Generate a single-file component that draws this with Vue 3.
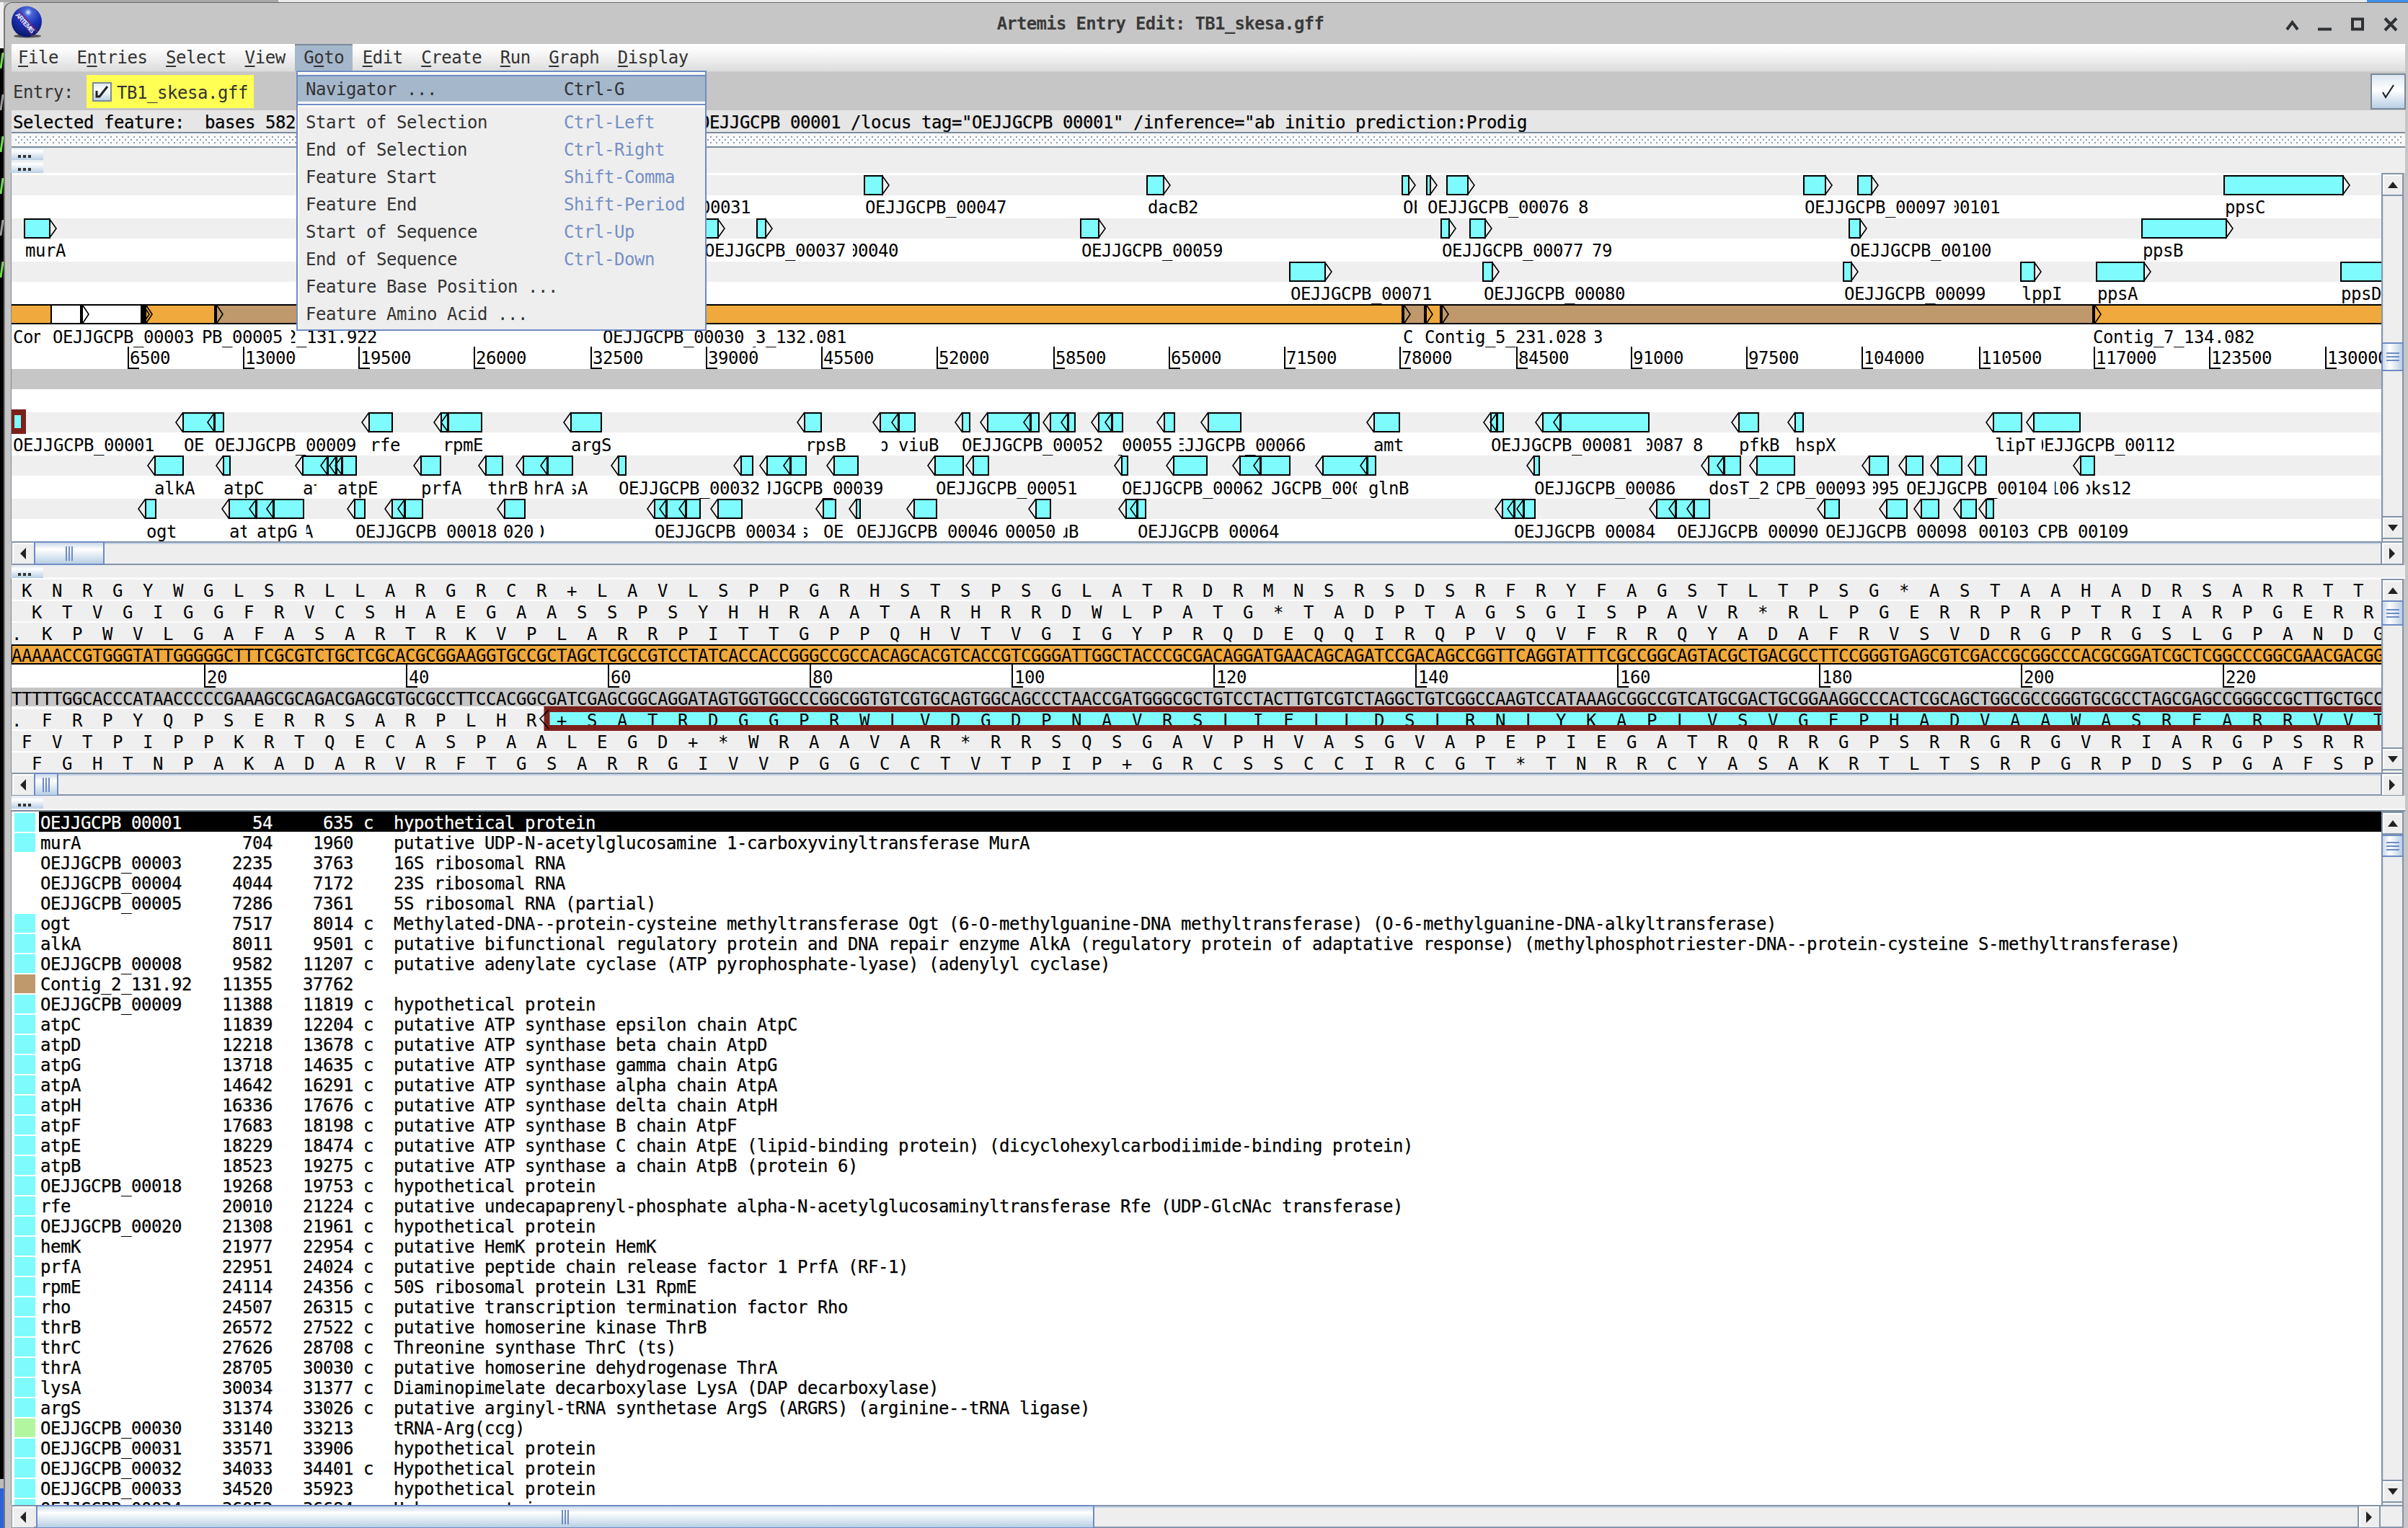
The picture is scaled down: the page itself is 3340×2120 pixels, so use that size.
<script setup>
const menus = [
  ['', 'F', 'ile'], ['E', 'n', 'tries'], ['', 'S', 'elect'], ['', 'V', 'iew'], ['G', 'o', 'to'],
  ['', 'E', 'dit'], ['', 'C', 'reate'], ['', 'R', 'un'], ['', 'G', 'raph'], ['', 'D', 'isplay'],
]
const gotoItems = [
  ['Start of Selection', 'Ctrl-Left'],
  ['End of Selection', 'Ctrl-Right'],
  ['Feature Start', 'Shift-Comma'],
  ['Feature End', 'Shift-Period'],
  ['Start of Sequence', 'Ctrl-Up'],
  ['End of Sequence', 'Ctrl-Down'],
  ['Feature Base Position ...', ''],
  ['Feature Amino Acid ...', ''],
]
const selectionRange = 'Selected feature:  bases 582'
const selectionNotes = 'OEJJGCPB_00001 /locus_tag="OEJJGCPB_00001" /inference="ab initio prediction:Prodig'

/* ---- Overview: x positions are window coordinates, OX is the canvas' left edge ---- */
const OX = 16
const forward = [
  { y: 3, boxes: [[1198, 1224], [1590, 1614], [1944, 1954], [1978, 1984], [2006, 2036], [2501, 2532], [2576, 2596], [3084, 3250]] },
  { y: 63, boxes: [[33, 69], [950, 996], [1049, 1062], [1498, 1524], [1998, 2010], [2038, 2060], [2564, 2580], [2970, 3088]] },
  { y: 123, boxes: [[1788, 1838], [2056, 2070], [2556, 2568], [2802, 2822], [2907, 2974], [3246, 3340]] },
]
const reverse = [
  { y: 332, boxes: [[253, 297], [297, 310], [511, 544], [611, 621], [621, 668], [791, 834], [1115, 1139], [1220, 1246], [1246, 1269], [1334, 1345], [1369, 1429], [1429, 1441], [1456, 1481], [1481, 1491], [1523, 1542], [1542, 1557], [1614, 1629], [1675, 1721], [1905, 1941], [2067, 2076], [2076, 2085], [2139, 2164], [2164, 2287], [2411, 2439], [2489, 2501], [2764, 2804], [2820, 2885]] },
  { y: 392, boxes: [[214, 254], [309, 319], [419, 454], [454, 466], [466, 474], [474, 494], [583, 611], [673, 697], [725, 759], [759, 794], [857, 868], [1027, 1044], [1063, 1096], [1096, 1118], [1156, 1190], [1296, 1336], [1349, 1371], [1555, 1564], [1627, 1674], [1719, 1748], [1748, 1789], [1834, 1896], [1896, 1908], [2127, 2135], [2369, 2391], [2391, 2414], [2436, 2489], [2592, 2619], [2643, 2667], [2687, 2721], [2739, 2755], [2885, 2905]] },
  { y: 452, boxes: [[201, 216], [317, 355], [355, 379], [379, 421], [491, 506], [543, 561], [561, 586], [699, 728], [907, 924], [924, 951], [951, 971], [995, 1029], [1141, 1159], [1187, 1193], [1267, 1299], [1436, 1457], [1561, 1577], [1577, 1589], [2083, 2100], [2100, 2113], [2113, 2129], [2297, 2324], [2324, 2349], [2349, 2371], [2530, 2551], [2616, 2645], [2664, 2689], [2719, 2741], [2754, 2765]] },
]
const P = 'OEJJGCPB_'
/* [text, x, visible from, visible to] */
const labelRows = [
  { y: 56, items: [['00031', 971], [P + '00047', 1200], ['dacB2', 1592], ['OE', 1946, 0, 1965], [P + '00076', 1980], ['8', 2189], [P + '00097', 2503], ['00101', 2704, 2711], ['ppsC', 3086]] },
  { y: 116, items: [['murA', 35], [P + '00037', 977], ['00040', 1176, 1183], [P + '00059', 1500], [P + '00077', 2000], ['79', 2208], [P + '00100', 2566], ['ppsB', 2972]] },
  { y: 176, items: [[P + '00071', 1790], [P + '00080', 2058], [P + '00099', 2558], ['lppI', 2804], ['ppsA', 2909], ['ppsD', 3247]] },
  { y: 236, items: [['Con', 18, 0, 56], [P + '00003', 73], ['PB_00005', 280], ['2_131.922', 397, 404], [P + '00030', 836], ['_3_132.081', 1034, 1044], ['C', 1946], ['Contig_5_231.028', 1976], ['3', 2209, 2212], ['Contig_7_134.082', 2903]] },
  { y: 386, items: [[P + '00001', 18], ['OE', 255], [P + '00009', 298], ['rfe', 513], ['rpmE', 614], ['argS', 792], ['rpsB', 1117], ['b', 1218, 1223], ['viuB', 1246], [P + '00052', 1334], ['_00055', 1542, 1551], ['EJJGCPB_00066', 1629, 1636], ['amt', 1905], [P + '00081', 2068], ['0087', 2279, 2284], ['8', 2348], ['pfkB', 2412], ['hspX', 2490], ['lipT', 2767], [P + '00112', 2821, 2832]] },
  { y: 446, items: [['alkA', 214], ['atpC', 310], ['at', 420, 0, 439], ['atpE', 468], ['prfA', 584], ['thrB', 676], ['hrA', 740], ['sA', 787, 794], [P + '00032', 858], ['JJGCPB_00039', 1057, 1065], [P + '00051', 1298], [P + '00062', 1556], ['JGCPB_000', 1763, 0, 1882], ['glnB', 1898], [P + '00086', 2128], ['dosT_2', 2370], ['CPB_00093', 2462, 2465], ['095', 2592, 2598], [P + '00104', 2644], ['106', 2842, 2850], ['pks12', 2886, 2894]] },
  { y: 506, items: [['ogt', 203], ['at', 318, 0, 342], ['atpG', 356], ['A', 420, 425], [P + '00018', 493], ['020', 698], ['0', 741, 750], [P + '00034', 908], ['s', 1108, 1115], ['OE', 1142], [P + '00046', 1188], ['00050', 1394], ['uB', 1468, 1475], [P + '00064', 1578], [P + '00084', 2100], [P + '00090', 2326], [P + '00098', 2532], ['00103', 2744], ['CPB_00109', 2826]] },
]
const labels = labelRows.flatMap(r =>
  r.items.map(([t, x, from = 0, to = 3340]) => {
    const left = Math.max(from, x)
    const right = Math.min(to, x + t.length * 14 + 2)
    return { t, y: r.y, left: left - OX, w: right - left, dx: x - left }
  }),
)
const scale = [177, 337, 497, 657, 819, 979, 1139, 1299, 1461, 1621, 1781, 1941, 2103, 2262, 2422, 2582, 2745, 2904, 3064, 3225]
  .map((x, i) => ({ x: x - OX, n: 6500 * (i + 1) }))
const contigs = [
  [16, 71, '#f0a93c'], [71, 113, '#fff'], [113, 197, '#fff'], [197, 299, '#f0a93c'], [299, 948, '#bf986b'],
  [948, 1946, '#f0a93c'], [1946, 1977, '#bf986b'], [1977, 1999, '#f0a93c'], [1999, 2904, '#bf986b'], [2904, 3340, '#f0a93c'],
]
const contigTips = [113, 197, 201, 299, 1946, 1977, 1999, 2904]

/* ---- Base view ---- */
const bases =
  'AAAAACCGTGGGTATTGGGGGCTTTCGCGTCTGCTCGCACGCGGAAGGTGCCGCTAGCTCGCCGTCCTATCACCACCGGGCCGCCACAGCACGTCACCGTCGGGATTGGCTACCCGCGACAGGATGAACAGCAGATCCGACAGCCGGTTCAGGTATTTCGCCGGCAGTACGCTGACGCCTTCCGGGTGAGCGTCGACCGCGGCCCACGCGGATCGCTCGGCCCGGCGAACGACGGT'
const pair = { A: 'T', T: 'A', C: 'G', G: 'C' }
const complement = [...bases].map(b => pair[b]).join('')
const order = 'TCAG'
const code = 'FFLLSSSSYY#+CC*WLLLLPPPPHHQQRRRRIIIMTTTTNNKKSSRRVVVVAAAADDEEGGGG'
const amino = c => code[order.indexOf(c[0]) * 16 + order.indexOf(c[1]) * 4 + order.indexOf(c[2])]
function frame(offset, backwards) {
  const out = Array(bases.length).fill(' ')
  if (offset === 2) out[0] = '.'
  for (let i = offset; i + 3 <= bases.length; i += 3) {
    const c = backwards ? [...complement.slice(i, i + 3)].reverse() : bases.slice(i, i + 3)
    out[i + 1] = amino(c)
  }
  return out.join('')
}
const forwardFrames = [0, 1, 2].map(o => frame(o, false))
const reverseFrames = [2, 0, 1].map(o => frame(o, true))
const baseTicks = Array.from({ length: 11 }, (_, i) => ({ x: 267 + i * 280, n: (i + 1) * 20 }))

/* ---- Feature list ---- */
const C = '#7dfbfd'
const features = [
  [C, P + '00001', 54, 635, 'c', 'hypothetical protein'],
  [C, 'murA', 704, 1960, '', 'putative UDP-N-acetylglucosamine 1-carboxyvinyltransferase MurA'],
  ['', P + '00003', 2235, 3763, '', '16S ribosomal RNA'],
  ['', P + '00004', 4044, 7172, '', '23S ribosomal RNA'],
  ['', P + '00005', 7286, 7361, '', '5S ribosomal RNA (partial)'],
  [C, 'ogt', 7517, 8014, 'c', 'Methylated-DNA--protein-cysteine methyltransferase Ogt (6-O-methylguanine-DNA methyltransferase) (O-6-methylguanine-DNA-alkyltransferase)'],
  [C, 'alkA', 8011, 9501, 'c', 'putative bifunctional regulatory protein and DNA repair enzyme AlkA (regulatory protein of adaptative response) (methylphosphotriester-DNA--protein-cysteine S-methyltransferase)'],
  [C, P + '00008', 9582, 11207, 'c', 'putative adenylate cyclase (ATP pyrophosphate-lyase) (adenylyl cyclase)'],
  ['#bf986b', 'Contig_2_131.92', 11355, 37762, '', ''],
  [C, P + '00009', 11388, 11819, 'c', 'hypothetical protein'],
  [C, 'atpC', 11839, 12204, 'c', 'putative ATP synthase epsilon chain AtpC'],
  [C, 'atpD', 12218, 13678, 'c', 'putative ATP synthase beta chain AtpD'],
  [C, 'atpG', 13718, 14635, 'c', 'putative ATP synthase gamma chain AtpG'],
  [C, 'atpA', 14642, 16291, 'c', 'putative ATP synthase alpha chain AtpA'],
  [C, 'atpH', 16336, 17676, 'c', 'putative ATP synthase delta chain AtpH'],
  [C, 'atpF', 17683, 18198, 'c', 'putative ATP synthase B chain AtpF'],
  [C, 'atpE', 18229, 18474, 'c', 'putative ATP synthase C chain AtpE (lipid-binding protein) (dicyclohexylcarbodiimide-binding protein)'],
  [C, 'atpB', 18523, 19275, 'c', 'putative ATP synthase a chain AtpB (protein 6)'],
  [C, P + '00018', 19268, 19753, 'c', 'hypothetical protein'],
  [C, 'rfe', 20010, 21224, 'c', 'putative undecapaprenyl-phosphate alpha-N-acetylglucosaminyltransferase Rfe (UDP-GlcNAc transferase)'],
  [C, P + '00020', 21308, 21961, 'c', 'hypothetical protein'],
  [C, 'hemK', 21977, 22954, 'c', 'putative HemK protein HemK'],
  [C, 'prfA', 22951, 24024, 'c', 'putative peptide chain release factor 1 PrfA (RF-1)'],
  [C, 'rpmE', 24114, 24356, 'c', '50S ribosomal protein L31 RpmE'],
  [C, 'rho', 24507, 26315, 'c', 'putative transcription termination factor Rho'],
  [C, 'thrB', 26572, 27522, 'c', 'putative homoserine kinase ThrB'],
  [C, 'thrC', 27626, 28708, 'c', 'Threonine synthase ThrC (ts)'],
  [C, 'thrA', 28705, 30030, 'c', 'putative homoserine dehydrogenase ThrA'],
  [C, 'lysA', 30034, 31377, 'c', 'Diaminopimelate decarboxylase LysA (DAP decarboxylase)'],
  [C, 'argS', 31374, 33026, 'c', 'putative arginyl-tRNA synthetase ArgS (ARGRS) (arginine--tRNA ligase)'],
  ['#b2f7a0', P + '00030', 33140, 33213, '', 'tRNA-Arg(ccg)'],
  [C, P + '00031', 33571, 33906, '', 'hypothetical protein'],
  [C, P + '00032', 34033, 34401, 'c', 'Hypothetical protein'],
  [C, P + '00033', 34520, 35923, '', 'hypothetical protein'],
  [C, P + '00034', 36052, 36684, 'c', 'Unknown protein'],
].map(([color, name, from, to, strand, product]) => ({
  color,
  text: name.padEnd(15) + String(from).padStart(8) + String(to).padStart(8) + ' ' + (strand || ' ') + '  ' + product,
}))
</script>

<template>
  <div class="screen">
    <div class="above"><i class="above-a"></i><i class="above-b"></i><i class="above-c"></i></div>
    <div class="body">
      <div class="behind">
        <i class="paper"></i>
        <i v-for="n in 6" :key="n" class="term"></i>
        <i class="blackout"></i><i class="edge"></i><i class="desk"></i>
      </div>
      <div class="window">
        <header class="title">
          <svg class="logo" width="44" height="46" viewBox="0 0 44 46">
            <defs>
              <radialGradient id="ball" cx=".55" cy=".2" r=".85">
                <stop offset="0" stop-color="#dff0ff" /><stop offset=".14" stop-color="#4a68d8" />
                <stop offset=".5" stop-color="#1a2fb4" /><stop offset="1" stop-color="#0a1560" />
              </radialGradient>
            </defs>
            <ellipse cx="22" cy="42" rx="19" ry="2.5" fill="#555" />
            <ellipse cx="21" cy="22" rx="21" ry="21.5" fill="url(#ball)" />
            <path d="M10 6 36 36M5 12 29 41" stroke="#7a2a6a" stroke-width="1.5" />
            <text x="0" y="0" transform="translate(5 13) rotate(48)" font-family="Liberation Sans, sans-serif" font-weight="bold" font-size="9" textLength="34" fill="#e8ecff">ARTEMIS</text>
          </svg>
          <span class="caption">Artemis Entry Edit: TB1_skesa.gff</span>
          <svg class="winbtns" width="170" height="24" viewBox="0 0 170 24">
            <g fill="none" stroke="#2e3234" stroke-width="4">
              <path d="M10 19 17.500 9 25 19" /><path d="M53 18.500H72" /><path d="M101 4.500H115V18.500H101Z" /><path d="M146 3.500 162 20M162 3.500 146 20" />
            </g>
          </svg>
        </header>

        <nav class="menubar">
          <span v-for="(m, i) in menus" :key="i" class="menu" :class="{ open: i === 4 }">{{ m[0] }}<u>{{ m[1] }}</u>{{ m[2] }}</span>
          <div class="popup">
            <div class="item hot"><span>Navigator ...</span><span class="key">Ctrl-G</span></div>
            <div class="sep"></div>
            <div v-for="g in gotoItems" :key="g[0]" class="item"><span>{{ g[0] }}</span><span class="key">{{ g[1] }}</span></div>
          </div>
        </nav>

        <div class="entry">
          <span class="entry-label">Entry:</span>
          <div class="entry-file">
            <svg width="27" height="27" viewBox="0 0 27 27">
              <defs><linearGradient id="cb" x2="0" y2="1"><stop offset="0" stop-color="#dde8f4" /><stop offset=".4" stop-color="#fff" /><stop offset="1" stop-color="#b8cfe5" /></linearGradient></defs>
              <rect x="1" y="1" width="25" height="25" fill="url(#cb)" stroke="#7a8a99" stroke-width="2" />
              <path d="M6 12v8h4L21 6" fill="none" stroke="#222" stroke-width="3" />
            </svg>
            <span>TB1_skesa.gff</span>
          </div>
          <div class="apply">
            <svg width="24" height="24" viewBox="0 0 24 24"><path d="M4 13 8 20 19 3" fill="none" stroke="#222" stroke-width="2.200" /></svg>
          </div>
        </div>

        <div class="status"><span class="status-pos">{{ selectionRange }}</span><span>{{ selectionNotes }}</span></div>

        <svg class="divider" width="3320" height="22">
          <defs>
            <pattern id="dots" width="8" height="8" patternUnits="userSpaceOnUse" y="6">
              <rect width="8" height="8" fill="#fafafa" /><rect x="1" y="0" width="2" height="2" fill="#8b9bab" /><rect x="5" y="4" width="2" height="2" fill="#8b9bab" />
            </pattern>
          </defs>
          <rect width="3320" height="22" fill="#f6f6f6" /><rect width="3320" height="2" fill="#7b8b9b" /><rect y="20" width="3320" height="2" fill="#7b8b9b" />
          <rect x="5" y="6" width="3310" height="12" fill="url(#dots)" />
        </svg>

        <div class="handles first"><span class="handle"><i></i><i></i><i></i></span><span class="handle"><i></i><i></i><i></i></span></div>

        <section class="view overview">
          <svg class="canvas" width="3287" height="511">
            <rect width="3287" height="511" fill="#fff" />
            <rect v-for="y in [3, 63, 123, 332, 392, 452]" :key="y" :y="y" width="3287" height="28" fill="#efefef" />
            <rect y="272" width="3287" height="28" fill="#c6c6c6" />
            <rect y="182" width="3287" height="28" fill="#000" />
            <rect v-for="c in contigs" :key="c[0]" :x="c[0] - 16" y="184" :width="c[1] - c[0]" height="24" :fill="c[2]" />
            <rect x="54" y="184" width="2" height="24" />
            <g v-for="t in contigTips" :key="t">
              <rect :x="t - 18" y="184" width="4" height="24" />
              <path :d="`M${t - 14} 184L${t - 6} 196L${t - 14} 208`" class="tip" />
            </g>
            <svg v-for="(l, i) in labels" :key="i" :x="l.left" :y="l.y - 22" :width="l.w" height="30"><text :x="l.dx" y="22">{{ l.t }}</text></svg>
            <g v-for="s in scale" :key="s.n">
              <path :d="`M${s.x + 1} 241V271H${s.x + 16}`" class="tick" /><text :x="s.x + 3" y="265">{{ s.n }}</text>
            </g>
            <g v-for="r in forward" :key="r.y">
              <g v-for="b in r.boxes" :key="b[0]">
                <path :d="`M${b[1] - 17} ${r.y}L${b[1] - 7} ${r.y + 14}L${b[1] - 17} ${r.y + 28}`" class="tip" />
                <rect :x="b[0] - 15" :y="r.y + 1" :width="b[1] - b[0] - 1" height="26" class="box" />
              </g>
            </g>
            <g v-for="r in reverse" :key="r.y">
              <rect v-for="b in r.boxes" :key="b[0]" :x="b[0] - 15" :y="r.y + 1" :width="b[1] - b[0] - 1" height="26" class="box" />
              <path v-for="b in r.boxes" :key="'t' + b[0]" :d="`M${b[0] - 15} ${r.y}L${b[0] - 25} ${r.y + 14}L${b[0] - 15} ${r.y + 28}`" class="tip" />
            </g>
            <rect x="0" y="328" width="20" height="34" fill="#7c201b" /><rect x="4" y="336" width="9" height="18" fill="#7dfbfd" />
          </svg>
          <div class="vbar">
            <span class="btn up"></span><span class="lane before"></span><span class="thumb"><i></i><i></i><i></i></span><span class="lane"></span><span class="btn down"></span>
          </div>
        </section>
        <div class="hbar"><span class="btn left"></span><span class="thumb t1"><i></i><i></i><i></i></span><span class="lane"></span><span class="btn right"></span></div>

        <div class="handles mid"><span class="handle"><i></i><i></i><i></i></span></div>

        <section class="view basesview">
          <svg class="canvas" width="3287" height="269" xml:space="preserve">
            <rect width="3287" height="269" fill="#fff" />
            <rect v-for="y in [1, 31, 61, 181, 211, 241]" :key="y" :y="y" width="3287" height="28" fill="#efefef" />
            <rect y="91" width="3287" height="28" fill="#000" /><rect x="1" y="93" width="3286" height="24" fill="#f0a93c" />
            <rect y="151" width="3287" height="26" fill="#c6c6c6" />
            <text v-for="(f, i) in forwardFrames" :key="'f' + i" x="0" :y="25 + i * 30">{{ f }}</text>
            <text x="0" y="115">{{ bases }}</text>
            <g v-for="t in baseTicks" :key="t.n">
              <path :d="`M${t.x + 1} 119V150H${t.x + 16}`" class="tick" /><text :x="t.x + 4" y="145">{{ t.n }}</text>
            </g>
            <text x="0" y="175">{{ complement }}</text>
            <rect x="742" y="181" width="2560" height="28" fill="#7dfbfd" />
            <text v-for="(f, i) in reverseFrames" :key="'r' + i" x="0" :y="205 + i * 30">{{ f }}</text>
            <rect x="742.500" y="181" width="2570" height="26" fill="none" stroke="#7c201b" stroke-width="8" />
            <path d="M745 182L733 194L745 208" class="tip" />
          </svg>
          <div class="vbar">
            <span class="btn up"></span><span class="thumb b2"><i></i><i></i><i></i></span><span class="lane"></span><span class="btn down"></span>
          </div>
        </section>
        <div class="hbar second"><span class="btn left"></span><span class="thumb t2"><i></i><i></i><i></i></span><span class="lane"></span><span class="btn right"></span></div>

        <div class="handles"><span class="handle"><i></i><i></i><i></i></span></div>

        <section class="view listview">
          <div class="list">
            <div v-for="(f, i) in features" :key="i" class="row" :class="{ picked: i === 0 }">
              <span class="swatch" :style="{ background: f.color || '#fff' }"></span><span class="text">{{ f.text }}</span>
            </div>
          </div>
          <div class="vbar">
            <span class="btn up"></span><span class="thumb b3"><i></i><i></i><i></i></span><span class="lane"></span><span class="btn down"></span>
          </div>
        </section>
        <div class="hbar third"><span class="btn left"></span><span class="thumb t3"><i></i><i></i><i></i></span><span class="lane"></span><span class="btn right"></span><span class="corner"></span></div>
      </div>
    </div>
  </div>
</template>

<style>
body { margin: 0; background: #000; }
</style>

<style scoped>
* { box-sizing: border-box; }
.screen { width: 3340px; height: 2120px; overflow: hidden; display: flex; flex-direction: column; font-family: "DejaVu Sans Mono", "Liberation Mono", monospace; font-size: 24px; letter-spacing: -0.449px; white-space: pre; color: #333; background: #c6c6c6; }
.above { height: 3px; display: flex; flex: none; }
.above-a { width: 386px; background: #a8a8a8; }
.above-b { flex: 1; background: #ececec; }
.above-c { width: 57px; background: #3d8fe8; }
.body { flex: 1; min-height: 0; display: flex; }
.behind { width: 5px; background: #000; display: flex; flex-direction: column; flex: none; }
.paper { height: 64px; background: #f2f2f2; margin-bottom: 6px; }
.term { height: 22px; width: 3px; margin: 0 0 36px 1px; border-left: 3px solid #6fe04a; transform: skewX(-8deg); }
.term:nth-of-type(3n) { border-color: #999; }
.blackout { flex: 1; }
.edge { height: 13px; background: #bbb; margin-top: 0; }
.desk { height: 55px; background: #2b62dc; }
.window { flex: 1; min-width: 0; display: flex; flex-direction: column; border-left: 2px solid #777; border-top: 1px solid #666; border-top-left-radius: 12px; background: #c6c6c6; padding: 0 4px 0 9px; position: relative; }
.title { height: 57px; flex: none; display: flex; align-items: center; background: #c6c6c6; position: relative; }
.logo { flex: none; margin-top: -4px; }
.caption { flex: 1; text-align: center; margin-right: 4px; margin-left: 1px; padding-top: 1px; color: #3a3a3a; font-weight: bold; letter-spacing: -0.700px; }
.winbtns { flex: none; margin-right: 4px; margin-top: 2px; }
.menubar { height: 39px; flex: none; display: flex; background: linear-gradient(#fff, #fafafa 25%, #dcdcdc); border-bottom: 1px solid #ccc; position: relative; color: #333; }
.menu { padding: 0 12.750px; line-height: 38px; height: 38px; }
.menu:first-child { padding-left: 9px; }
.menu.open { background: #a5b7cb; border-top: 2px solid #7a8a99; line-height: 34px; padding: 0 11.750px; margin: 0 1px; }
u { text-decoration-thickness: 2px; text-underline-offset: 3px; }
.popup { position: absolute; left: 395px; top: 37px; width: 569px; height: 361px; z-index: 5; background: #eee; border: 2px solid #6f8bc4; padding-top: 4px; box-shadow: inset 0 2px #fff, inset 2px 0 #fff; }
.item { height: 38px; line-height: 36px; display: flex; padding-left: 11px; color: #333; }
.item span:first-child { width: 358px; }
.key { color: #7690c4; }
.hot { height: 37px; line-height: 37px; background: #a5b7cb; border-top: 2px solid #6f8bc4; }
.hot .key { color: #333; }
.sep { height: 11px; border-top: 3px solid #fff; position: relative; background: linear-gradient(#6f8bc4 0 2px, #fff 2px 5px, transparent 5px); }
.entry { height: 53px; flex: none; display: flex; align-items: center; background: #c6c6c6; padding-top: 1px; color: #333; }
.entry-label { width: 104px; padding-left: 2px; padding-top: 2px; }
.entry-file { width: 232px; height: 46px; background: #ffff54; display: flex; align-items: center; gap: 7px; padding-left: 8px; }
.entry-file span { padding-top: 3px; }
.apply { margin-left: auto; width: 49px; height: 50px; border: 2px solid #7a8a99; background: linear-gradient(#dce7f2, #fff 45%, #b8cfe5); display: flex; align-items: center; justify-content: center; margin-right: -1px; }
.status { height: 30px; flex: none; background: #e6e6e6; line-height: 34px; padding-left: 2px; overflow: hidden; color: #000; display: flex; }
.status-pos { width: 952px; flex: none; }
.divider { flex: none; display: block; }
.handles { height: 20px; flex: none; background: #eee; border-bottom: 2px solid #fafafa; padding-top: 1px; display: flex; flex-direction: column; gap: 1px; }
.handles.first { height: 35px; padding-top: 0; border-bottom: 0; }
.handles.mid { height: 19px; }
.handle { width: 44px; height: 17px; flex: none; background: linear-gradient(#dfe8f1, #fff 25%, #b8cfe5); display: flex; gap: 3px; align-items: center; padding: 6px 0 0 9px; }
.handle i { width: 4px; height: 4px; background: #333; }
.view { display: flex; flex: none; border-left: 1px solid #7a8a99; margin-left: -1px; position: relative; }
.canvas { display: block; flex: none; }
.canvas text { fill: #000; white-space: pre; }
.canvas, .list, .status { -webkit-text-stroke: 0.250px; }
.box { fill: #7dfbfd; stroke: #000; stroke-width: 2; }
.tip { fill: none; stroke: #000; stroke-width: 1.600; }
.tick { fill: none; stroke: #000; stroke-width: 2; }
.overview { height: 511px; }
.basesview { height: 269px; }
.listview { height: 964px; border-top: 2px solid #7a8a99; }
.vbar { width: 31px; display: flex; flex-direction: column; border: 2px solid #8494a8; border-top-width: 2px; border-bottom: 0; background: #eee; }
.hbar { height: 33px; flex: none; width: 3318px; display: flex; border: 2px solid #8494a8; border-left-width: 1px; background: #eee; }
.btn { width: 30px; height: 30px; background: #eee; display: flex; align-items: center; justify-content: center; flex: none; box-shadow: inset 2px 2px #fff; }
.vbar .btn { width: 27px; }
.vbar .up { border-bottom: 2px solid #8494a8; }
.vbar .down { border-top: 2px solid #8494a8; border-bottom: 2px solid #8494a8; margin-bottom: 3px; height: 32px; }
.hbar .btn { height: 29px; }
.hbar .right { border-left: 2px solid #8494a8; }
.btn::after { content: ""; border: 7px solid transparent; }
.up::after { border-bottom: 9px solid #222; border-top: 0; }
.down::after { border-top: 9px solid #222; border-bottom: 0; }
.left::after { border-right: 8px solid #222; border-left: 0; border-top-width: 8px; border-bottom-width: 8px; }
.right::after { border-left: 8px solid #222; border-right: 0; border-top-width: 8px; border-bottom-width: 8px; }
.lane { flex: 1; }
.vbar .lane { box-shadow: inset 2px 0 #dfe7f0; }
.hbar .lane { box-shadow: inset 0 2px #c3d3e6; }
.lane.before { flex: 0 0 203px; }
.thumb { display: flex; align-items: center; justify-content: center; border: 2px solid #6f8bc4; flex: none; }
.vbar .thumb { flex-direction: column; gap: 3px; height: 40px; margin: 0 -2px; background: linear-gradient(90deg, #c8d8ea, #fff 35%, #b8cfe5); }
.vbar .thumb i { width: 18px; height: 2px; background: #6f8bc4; }
.vbar .b2 { height: 35px; margin-top: -2px; }
.vbar .b3 { height: 31px; }
.hbar .thumb { gap: 2px; height: 33px; margin-top: -2px; background: linear-gradient(#c8d8ea, #fff 30%, #b8cfe5); }
.hbar .thumb i { width: 2px; height: 20px; background: #6f8bc4; }
.t1 { width: 98px; }
.t2 { width: 34px; }
.t3 { width: 1468px; }
.second { height: 32px; }
.third { height: 32px; }
.third .thumb { margin-left: 3px; }
.third .corner { width: 32px; border-left: 2px solid #8494a8; }
.list { width: 3287px; height: 962px; background: #fff; overflow: hidden; color: #000; }
.row { height: 28px; display: flex; }
.swatch { width: 29px; height: 26px; margin: 2px 5px 0 4px; flex: none; }
.text { flex: 1; line-height: 32px; padding-left: 2px; height: 28px; }
.picked .text { background: #000; color: #fff; overflow: hidden; }
</style>
